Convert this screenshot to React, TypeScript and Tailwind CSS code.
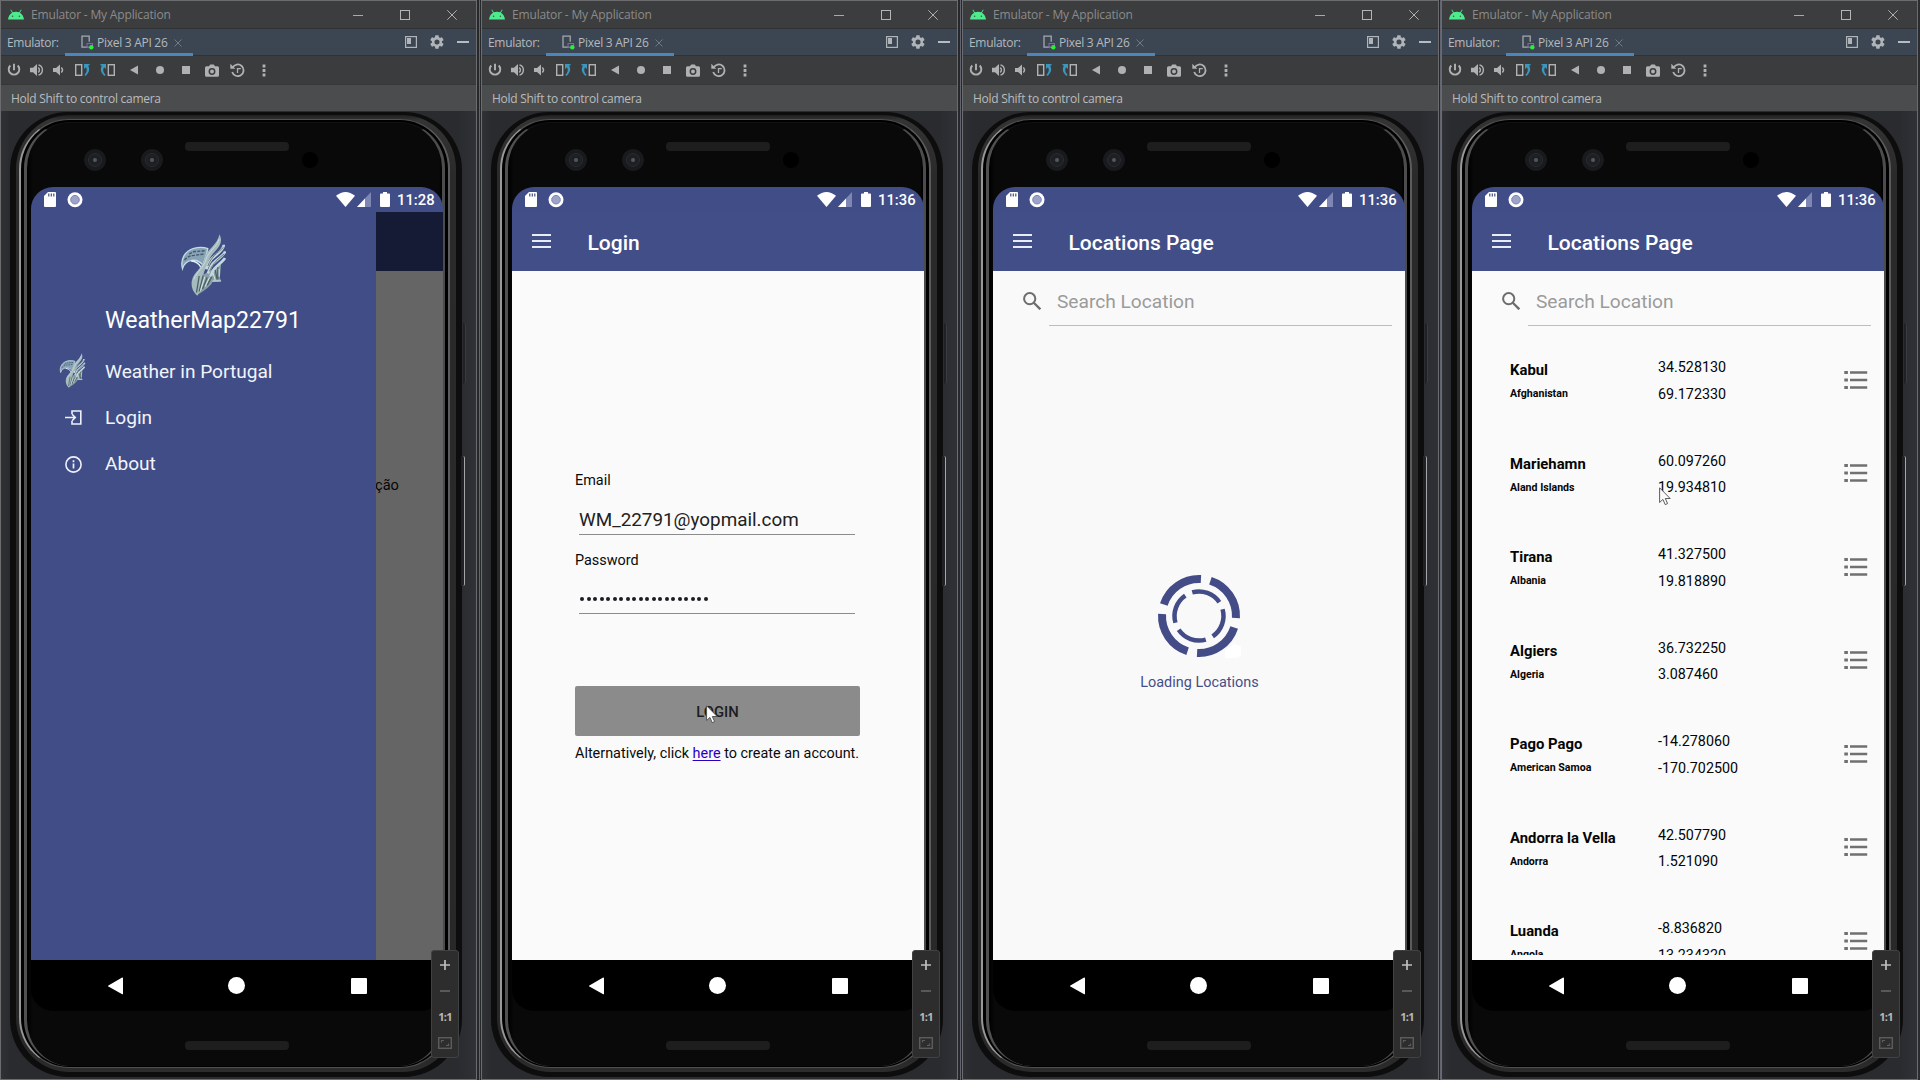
import type { ReactNode } from "react";

type IconProps = { className?: string; box: string; children: ReactNode };

function Icon({ className = "", box, children }: IconProps) {
  return (
    <svg viewBox={box} className={"block shrink-0 " + className} fill="none">
      {children}
    </svg>
  );
}

function AndroidHead() {
  return (
    <Icon box="0 0 16 11" className="h-[11px] w-4">
      <path d="M0 10.6C.3 7.6 1.8 5.1 4.1 3.7L2.4.9 3 .5l1.800 2.800C6.800 2.500 9.200 2.500 11.200 3.300L13 .5l.6.4-1.700 2.800C14.200 5.100 15.700 7.600 16 10.600Z" fill="#4deb8d" />
      <circle cx="4.600" cy="7.300" r=".8" fill="#2f6045" />
      <circle cx="11.400" cy="7.300" r=".8" fill="#2f6045" />
    </Icon>
  );
}

function TitleBar() {
  return (
    <div className="flex h-[28px] items-center border-b border-[#2f3133] bg-[#3b3d3f] pl-[7px] pr-[19px]">
      <AndroidHead />
      <span className="ml-[7px] whitespace-nowrap text-[12px] leading-[16px] tracking-[-0.17px] text-[#8b8b8b]">Emulator - My Application</span>
      <div className="ml-auto flex items-center gap-[37px]">
        <Icon box="0 0 10 10" className="size-[10px]"><path d="M0 5.500H10" stroke="#a9a9a9" /></Icon>
        <Icon box="0 0 10 10" className="size-[10px]"><rect x=".5" y=".5" width="9" height="9" stroke="#b5b5b5" /></Icon>
        <Icon box="0 0 10 10" className="size-[10px]"><path d="M.3.3 9.700 9.700M9.700.3.3 9.700" stroke="#b0b0b0" /></Icon>
      </div>
    </div>
  );
}

function TabBar() {
  return (
    <div className="flex h-[27px] border-b border-[#303336] bg-[#3c4652] pl-[6px] pr-[7px] text-[12px]">
      <span className="w-[58px] whitespace-nowrap pt-[6px] leading-[16px] tracking-[-0.3px] text-[#b4b9be]">Emulator:</span>
      <div className="flex h-[27px] w-[128px] border-b-[3px] border-[#4b86bd] pl-[16px]">
        <Icon box="0 0 13 15" className="mt-[6px] h-[15px] w-[13px]">
          <path d="M7.500 12.200H1V1.200h7.200v5.600" stroke="#a4a9ad" strokeWidth="1.300" />
          <rect x="6" y="8.500" width="5.500" height="4" stroke="#8067ab" />
          <circle cx="10.300" cy="12.300" r="2.200" fill="#2fee3a" />
        </Icon>
        <span className="ml-[3px] whitespace-nowrap pt-[6px] leading-[16px] tracking-[-0.28px] text-[#b4b9be]">Pixel 3 API 26</span>
        <Icon box="0 0 8 8" className="ml-auto mr-[11px] mt-[10px] size-2"><path d="M.5.5l7 7M7.500.5l-7 7" stroke="#707a84" /></Icon>
      </div>
      <div className="ml-auto flex items-center gap-[13px] pb-px">
        <Icon box="0 0 12 12" className="size-3"><rect x=".6" y=".6" width="10.800" height="10.800" stroke="#b0b4b8" strokeWidth="1.200" /><path d="M2 2h4v6H2z" fill="#b0b4b8" /></Icon>
        <Icon box="0 0 24 24" className="-mx-px size-4">
          <path fill="#b0b4b8" fillRule="evenodd" d="M19.400 13c.1-.6.1-1.400 0-2l2.200-1.700c.2-.2.3-.5.1-.7l-2-3.500c-.1-.2-.4-.3-.6-.2l-2.600 1c-.5-.4-1.100-.7-1.700-1L14.400 2.200c0-.2-.2-.4-.5-.4h-4c-.2 0-.4.200-.5.4L9 4.900c-.6.300-1.200.6-1.700 1l-2.600-1c-.2-.1-.5 0-.6.2l-2 3.500c-.1.200-.1.5.1.7L4.400 11c-.1.600-.1 1.400 0 2l-2.200 1.700c-.2.200-.2.500-.1.7l2 3.500c.1.200.4.300.6.2l2.600-1c.5.4 1.100.7 1.700 1l.4 2.700c.1.200.3.400.5.4h4c.3 0 .5-.2.500-.4l.4-2.700c.6-.3 1.200-.6 1.700-1l2.600 1c.2.100.5 0 .6-.2l2-3.500c.1-.2.100-.5-.1-.7ZM12 15.800a3.800 3.800 0 1 1 0-7.600 3.800 3.800 0 0 1 0 7.600Z" />
        </Icon>
        <Icon box="0 0 12 2" className="h-[2px] w-3"><path d="M0 1h12" stroke="#b8bcc0" strokeWidth="2" /></Icon>
      </div>
    </div>
  );
}

function Cell({ w, children }: { w: string; children: ReactNode }) {
  return <div className={"flex h-full items-center justify-center " + w}>{children}</div>;
}

function ToolBar() {
  const c = "#afb1b3";
  return (
    <div className="flex h-[29px] items-center border-b border-[#353739] bg-[#3b3c3e]">
      <Cell w="w-[26px]">
        <Icon box="0 0 14 14" className="size-[14px]"><path d="M3.300 2.500a5.300 5.300 0 1 0 7.400 0M7 .8v6.400" stroke={c} strokeWidth="1.900" /></Icon>
      </Cell>
      <Cell w="w-[19px]">
        <Icon box="0 0 14 14" className="size-[14px]"><path d="M0 4.700h3L7 1v12L3 9.300H0z" fill={c} /><path d="M8.200 4.600a3 3 0 0 1 0 4.800M8.500 1.900a5.300 5.300 0 0 1 0 10.200" stroke={c} strokeWidth="1.400" /></Icon>
      </Cell>
      <Cell w="w-[24px]">
        <Icon box="0 0 11 12" className="h-3 w-[11px]"><path d="M0 4h3l4-3.500v11L3 8H0z" fill={c} /><path d="M8.300 3.500q2.400 2.500 0 5" stroke={c} strokeWidth="1.500" /></Icon>
      </Cell>
      <Cell w="w-[25px]">
        <Icon box="0 0 15 14" className="mr-px h-[14px] w-[15px]"><rect x=".7" y="1.700" width="6" height="10.600" stroke={c} strokeWidth="1.400" /><path d="M9 1h5.500v1.500H13c2 3.200 1.600 7-2.600 10.500l-1-1.200c2.600-2.600 3-5 1.600-7.600L9 6z" fill="#3d96bd" /></Icon>
      </Cell>
      <Cell w="w-[26px]">
        <Icon box="0 0 15 14" className="mr-px h-[14px] w-[15px]"><rect x="8.300" y="1.700" width="6" height="10.600" stroke={c} strokeWidth="1.400" /><path d="M6 1H.5v1.500H2c-2 3.200-1.600 7 2.600 10.500l1-1.200C3 9.200 2.600 6.800 4 4.200L6 6z" fill="#3d96bd" /></Icon>
      </Cell>
      <Cell w="w-[26px]"><Icon box="0 0 8 10" className="h-[10px] w-2"><path d="M8 .5v9L0 5z" fill={c} /></Icon></Cell>
      <Cell w="w-[26px]"><div className="size-2 rounded-full bg-[#afb1b3]" /></Cell>
      <Cell w="w-[26px]"><div className="size-2 bg-[#afb1b3]" /></Cell>
      <Cell w="w-[26px]">
        <Icon box="0 0 14 13" className="h-[13px] w-[14px]"><path d="M1.500 2.300H4L5.200.6h3.600L10 2.300h2.500q1.500 0 1.500 1.500v7.400q0 1.500-1.500 1.500h-11Q0 12.700 0 11.200V3.800q0-1.500 1.500-1.500z" fill={c} /><circle cx="7" cy="7.500" r="2.700" stroke="#3b3c3e" strokeWidth="1.500" /></Icon>
      </Cell>
      <Cell w="w-[26px]">
        <Icon box="0 0 15 14" className="mr-px h-[14px] w-[15px]"><path d="M2.600 4.600a5.800 5.800 0 1 1-.4 4.400" stroke={c} strokeWidth="1.800" /><path d="M.3.800v5h5z" fill={c} /><path d="M7.500 10V5.700h3.300" stroke={c} strokeWidth="1.300" /></Icon>
      </Cell>
      <Cell w="w-[26px]"><Icon box="0 0 4 13" className="h-[13px] w-1"><path d="M.6.6h2.800v2.800H.6zM.6 5.100h2.800v2.800H.6zM.6 9.600h2.800v2.800H.6z" fill={c} /></Icon></Cell>
    </div>
  );
}

function Eagle({ className }: { className: string }) {
  return (
    <Icon box="18 18 134 186" className={className}>
      <path d="M22 122C14 94 30 68 56 61 70 57 88 58 98 62 94 82 88 96 84 112 74 100 62 96 50 97 36 99 26 108 22 122Z" fill="#86a2b4" stroke="#c4dde6" strokeWidth="4" />
      <path d="M28 96q12-14 30-14l28-4M42 78l14-7 34-3" stroke="#43566f" strokeWidth="4" strokeDasharray="9 4" />
      <path d="M48 99q20 1 30 20" stroke="#e2f4f5" strokeWidth="5" />
      <path d="M138 108 134 150 139 160 112 162C104 178 88 186 72 198L84 140Z" fill="#879fa6" />
      <path d="M133 19C142 36 138 52 120 70 100 90 98 106 91 122 80 142 86 162 77 190L66 203C46 186 44 158 59 138 74 120 84 110 88 90 94 66 126 52 133 19Z" fill="#a5bbbe" />
      <path d="M146 50C146 66 124 78 108 94 100 104 98 112 93 124M150 70C146 82 126 94 112 108 106 116 104 124 98 136M149 90C144 100 130 108 118 122 112 130 110 136 106 146" stroke="#c3d8dc" strokeWidth="8" />
      <path d="M145 58C126 76 108 86 98 114M147 78C130 92 114 104 103 130" stroke="#66796f" strokeWidth="3" />
      <path d="M128 118v36M120 126l6 28M110 146l-14 26M96 148 82 184M84 142 72 190M72 144l-8 50" stroke="#4f6264" strokeWidth="4" />
      <path d="M132 122v24M114 136l6 20M103 148l-13 28M89 146 76 188M112 159h25" stroke="#d6e9ea" strokeWidth="3" />
      <path d="M131 34C128 56 98 70 92 96 86 118 66 130 56 154" stroke="#c9dcdd" strokeWidth="3" />
    </Icon>
  );
}

function StatusBar({ time }: { time: string }) {
  return (
    <div className="flex h-[25px] shrink-0 items-start bg-[#414d87] pl-[13px] pr-[8px] pt-[5px]">
      <Icon box="0 0 12 15" className="h-[15px] w-3"><path d="M4 0h7q1 0 1 1v13q0 1-1 1H1q-1 0-1-1V4z" fill="#fff" /><path d="M4.800 1.500v3M7.300 1.500v3M9.800 1.500v3" stroke="#424c86" strokeWidth="1.200" /></Icon>
      <Icon box="0 0 16 16" className="ml-[11px] mr-px size-4"><circle cx="8" cy="7.700" r="7.500" fill="#fff" /><circle cx="8" cy="7.700" r="4.300" fill="#9da4c8" stroke="#7d86b3" /></Icon>
      <Icon box="0 0 19 15" className="ml-auto h-[15px] w-[19px]"><path d="M0 3.800Q9.500-3.800 19 3.800L9.500 15z" fill="#fff" /></Icon>
      <Icon box="0 0 14 15" className="ml-[2px] h-[15px] w-[14px]"><path d="M14 0v15H0z" fill="#7e86b4" /><path d="M8 6.400V15H0z" fill="#fff" /></Icon>
      <Icon box="0 0 10 15" className="ml-[9px] h-[15px] w-[10px]"><path d="M3 0h4v1.500h2q1 0 1 1V14q0 1-1 1H1q-1 0-1-1V2.500q0-1 1-1h2z" fill="#fff" /></Icon>
      <span className="ml-[7px] w-[38px] whitespace-nowrap font-['Roboto'] text-[14.800px] font-medium leading-[17px] text-white">{time}</span>
    </div>
  );
}

function AppBar({ title }: { title: string }) {
  return (
    <div className="flex h-[59px] shrink-0 items-start bg-[#424e88] pl-[20px] pt-[22px]">
      <Icon box="0 0 19 14" className="h-[14px] w-[19px]"><path d="M0 1h19M0 7h19M0 13h19" stroke="#e9ebf5" strokeWidth="2" /></Icon>
      <span className="ml-[36.500px] mt-[-3px] whitespace-nowrap font-['Roboto'] text-[21px] font-medium leading-[24px] text-white">{title}</span>
    </div>
  );
}

function NavBar() {
  return (
    <div className="flex h-[51px] shrink-0 items-center bg-black pl-[77px]">
      <Icon box="0 0 15 18" className="h-[18px] w-[15px]"><path d="M14.500.5q.5 0 .5.800v15.400q0 .8-.8.600L.4 9.600q-.6-.6 0-1.200L13.700.7z" fill="#fff" /></Icon>
      <div className="ml-[105px] size-[17px] rounded-full bg-white" />
      <div className="ml-[106px] size-4 rounded-[1px] bg-white" />
    </div>
  );
}

function Cursor({ className, fill }: { className: string; fill: string }) {
  return (
    <Icon box="0 0 13 19" className={"absolute h-[19px] w-[13px] " + className}>
      <path d="M.6.800v14.700l3.300-3.100 2.300 5.200 2.400-1-2.300-5.100h4.900z" fill={fill} stroke="#4b4b4b" strokeWidth=".9" />
    </Icon>
  );
}

function DrawerItem({ icon, label }: { icon: ReactNode; label: string }) {
  return (
    <div className="flex h-[46px] items-center">
      <div className="flex w-[74px] justify-center pl-[10px]">{icon}</div>
      <span className="whitespace-nowrap font-['Roboto'] text-[19.100px] leading-[24px] text-[#f2f4fa]">{label}</span>
    </div>
  );
}

function DrawerScreen() {
  return (
    <>
      <StatusBar time="11:28" />
      <div className="flex min-h-0 flex-1">
        <div className="w-[345px] bg-[#404d87] pt-[22px]">
          <Eagle className="ml-[150px] h-[62px] w-[45px]" />
          <div className="ml-[74px] mt-[11px] whitespace-nowrap font-['Roboto'] text-[23.100px] leading-[28px] text-white">WeatherMap22791</div>
          <div className="mt-[14px]">
            <DrawerItem icon={<Eagle className="mb-[4px] mr-[2px] h-[35px] w-[29px]" />} label="Weather in Portugal" />
            <DrawerItem
              icon={<Icon box="0 0 17 15" className="mb-px h-[15px] w-[17px]"><path d="M7 4V1h8.800v13H7v-3M0 7.500h10M7 4.200l3.300 3.300L7 10.800" stroke="#eef1fa" strokeWidth="1.600" /></Icon>}
              label="Login"
            />
            <DrawerItem
              icon={<Icon box="0 0 17 17" className="size-[17px]"><circle cx="8.500" cy="8.500" r="7.600" stroke="#eef1fa" strokeWidth="1.600" /><path d="M8.500 7.500v5M8.500 4.300v1.900" stroke="#eef1fa" strokeWidth="1.700" /></Icon>}
              label="About"
            />
          </div>
        </div>
        <div className="flex-1 overflow-hidden bg-[#656565]">
          <div className="h-[59px] bg-[#161b35]" />
          <div className="-ml-px mt-[205px] font-['Roboto'] text-[14.600px] leading-[18px] text-[#050505]">ção</div>
        </div>
      </div>
    </>
  );
}

function LoginScreen() {
  return (
    <>
      <StatusBar time="11:36" />
      <AppBar title="Login" />
      <div className="relative flex-1 bg-[#fafafa] pl-[63px] pt-[201px] font-['Roboto'] text-[14.420px] leading-[18px] text-[#0a0a0a]">
        <div>Email</div>
        <div className="ml-[4px] mt-[12px] h-[33px] w-[276px] whitespace-nowrap border-b border-[#8c8c8c] pt-[7px] text-[18.850px] leading-[22px] text-[#212121]">WM_22791@yopmail.com</div>
        <div className="mt-[17px]">Password</div>
        <div className="ml-[4px] mt-[11px] flex h-[33px] w-[276px] items-center gap-[2.500px] border-b border-[#8c8c8c] pl-px pt-[4px]">
          {Array.from({ length: 20 }, (_, i) => (
            <div key={i} className="size-[4px] rounded-full bg-[#1c1c24]" />
          ))}
        </div>
        <div className="mt-[72px] h-[50px] w-[285px] rounded-[2px] bg-[#8b8b8b] pt-[17px] text-center text-[14.800px] font-medium leading-[18px] text-[#1d1d1d]">LOGIN</div>
        <div className="mt-[9px] whitespace-nowrap">
          Alternatively, click <span className="text-[#2a00c8] underline underline-offset-2">here</span> to create an account.
        </div>
        <Cursor className="left-[194px] top-[434px]" fill="#ffffff" />
      </div>
    </>
  );
}

function SearchBar() {
  return (
    <div className="flex h-[55px] shrink-0 pl-[30px]">
      <Icon box="0 0 18 18" className="mt-[21px] size-[18px]"><circle cx="6.700" cy="6.700" r="5.600" stroke="#6d6d6d" strokeWidth="2" /><path d="m10.800 10.800 6.500 6.500" stroke="#6d6d6d" strokeWidth="2.300" /></Icon>
      <div className="ml-[8px] w-[343px] whitespace-nowrap border-b border-[#bdbdbd] pl-[8px] pt-[19px] font-['Roboto'] text-[19.150px] leading-[23px] text-[#9b9b9b]">Search Location</div>
    </div>
  );
}

// Point on a circle of radius r around (42, 42), clockwise degrees from twelve o'clock.
function arc(r: number, from: number, sweep: number) {
  const pt = (deg: number) => {
    const a = (deg * Math.PI) / 180;
    return `${42 + r * Math.sin(a)} ${42 - r * Math.cos(a)}`;
  };
  return `M${pt(from)}A${r} ${r} 0 0 1 ${pt(from + sweep)}`;
}

function LoadingScreen() {
  return (
    <>
      <StatusBar time="11:36" />
      <AppBar title="Locations Page" />
      <div className="flex flex-1 flex-col bg-[#f9f9fa]">
        <SearchBar />
        <div className="flex flex-col items-center pt-[248px]">
          <Icon box="0 0 84 84" className="size-[84px]">
            {[18, 108, 198, 288].map((a) => (
              <path key={a} d={arc(37, a, 75)} stroke="#434c87" strokeWidth="8" />
            ))}
            {[74, 164, 254, 344].map((a) => (
              <path key={a} d={arc(24.500, a, 72)} stroke="#434c87" strokeWidth="4.500" />
            ))}
            <path d="M68 77q6-5 9-7l10 3v8l-8 3H68z" fill="#fff" />
          </Icon>
          <div className="ml-px mt-[16px] whitespace-nowrap font-['Roboto'] text-[14.450px] leading-[18px] text-[#454e88]">Loading Locations</div>
        </div>
      </div>
    </>
  );
}

const places = [
  ["Kabul", "Afghanistan", "34.528130", "69.172330"],
  ["Mariehamn", "Aland Islands", "60.097260", "19.934810"],
  ["Tirana", "Albania", "41.327500", "19.818890"],
  ["Algiers", "Algeria", "36.732250", "3.087460"],
  ["Pago Pago", "American Samoa", "-14.278060", "-170.702500"],
  ["Andorra la Vella", "Andorra", "42.507790", "1.521090"],
  ["Luanda", "Angola", "-8.836820", "13.234320"],
];

function ListScreen() {
  return (
    <>
      <StatusBar time="11:36" />
      <AppBar title="Locations Page" />
      <div className="relative flex min-h-0 flex-1 flex-col bg-[#fafafa] pb-[5px]">
        <SearchBar />
        <div className="min-h-0 flex-1 overflow-hidden pt-[31px] font-['Roboto']">
          {places.map(([city, country, lat, lon]) => (
            <div key={city} className="flex h-[93.500px] pl-[38px] leading-[18px] text-[#050505]">
              <div className="w-[148px] whitespace-nowrap pt-[4px] text-[14.850px] font-bold">
                <div>{city}</div>
                <div className="mt-[8px] text-[10.600px] leading-[14px]">{country}</div>
              </div>
              <div className="w-[186px] whitespace-nowrap pt-px text-[14.300px]">
                <div>{lat}</div>
                <div className="mt-[8.500px]">{lon}</div>
              </div>
              <Icon box="0 0 24 20" className="mt-[12.500px] h-5 w-6">
                <path d="M6 2.500h17.200M6 10h17.200M6 17.500h17.200" stroke="#707070" strokeWidth="2.400" />
                <path d="M.3 2.500h3.600M.3 10h3.600M.3 17.500h3.600" stroke="#707070" strokeWidth="3.200" />
              </Icon>
            </div>
          ))}
        </div>
        <Cursor className="left-[187px] top-[216px]" fill="#fafafa" />
      </div>
    </>
  );
}

function Grille({ className }: { className: string }) {
  return (
    <div
      className={
        "h-[9px] w-[104px] rounded-[4px] bg-[#0f0f0f] bg-[radial-gradient(#2f2f2f_0.6px,transparent_0.8px)] bg-[length:2px_2px] " + className
      }
    />
  );
}

function Lens({ className }: { className: string }) {
  return (
    <div className={"flex size-[22px] items-center justify-center rounded-full bg-[#191a1d] " + className}>
      <div className="flex size-[14px] items-center justify-center rounded-full border border-[#2a2c30] bg-[#1d1f23]">
        <div className="size-[4px] rounded-full bg-[#54575b]" />
      </div>
    </div>
  );
}

function ZoomPanel() {
  return (
    <div className="absolute left-[430px] top-[839px] flex h-[108px] w-[28px] flex-col items-center rounded-[3px] border border-[#404142] bg-[#2d2d2e]">
      <Icon box="0 0 10 10" className="mt-[9px] size-[10px]"><path d="M0 5h10M5 0v10" stroke="#bfbfbf" strokeWidth="1.700" /></Icon>
      <div className="mt-[20px] h-[2px] w-[10px] bg-[#595959]" />
      <div className="mt-[17px] font-['Open_Sans'] text-[11px] font-bold leading-[16px] tracking-[-0.8px] text-[#b8b8b8]">1:1</div>
      <Icon box="0 0 14 12" className="mt-[12px] h-3 w-[14px]"><rect x=".7" y=".7" width="12.600" height="10.600" stroke="#5c5c5c" strokeWidth="1.400" /><path d="M3.500 5.500v-2h2.500M10.500 6.500v2H8" stroke="#5c5c5c" strokeWidth="1.200" /></Icon>
    </div>
  );
}

function Phone({ children }: { children: ReactNode }) {
  return (
    <div className="relative flex-1 bg-[linear-gradient(90deg,#303135,#2a2b2f_2%,#2a2b2f_96%,#303136)] pl-[9px] pt-px">
      <div className="h-[965px] w-[452px] rounded-[58px] bg-[#0d0d0d] px-[6px] pb-[5px] pt-[3px]">
        <div className="h-full rounded-[54px] bg-[linear-gradient(180deg,#1f1f1f,#343434_5px,#2a2a2a_60px,#282828_940px,#2c2c2c)] pb-[4px] pl-[3px] pr-[6px] pt-[4px]">
          <div className="h-full rounded-[50px] border-x-2 border-y border-b-[#505050] border-l-[#989898] border-r-[#5c5c5c] border-t-[#505050] bg-black px-[3px] pb-px pt-[2px]">
            <div className="flex h-full flex-col rounded-[46px] border-x-[3px] border-t border-l-[#505050] border-r-[#4c4c4c] border-t-[#111111] bg-[linear-gradient(90deg,#000,#090909_6px,#090909_412px,#000)] pl-[4px]">
              <div className="flex h-[64px] shrink-0 items-start">
                <Lens className="ml-[53px] mt-[26px]" />
                <Lens className="ml-[34.500px] mt-[26px]" />
                <Grille className="ml-[22.500px] mt-[19px]" />
                <div className="ml-[13px] mt-[29px] size-4 rounded-full bg-black" />
              </div>
              <div className="flex h-[824px] w-[412px] shrink-0 flex-col overflow-hidden rounded-[22px]">
                {children}
                <NavBar />
              </div>
              <Grille className="ml-[154px] mt-[30px]" />
            </div>
          </div>
        </div>
      </div>
      <div className="absolute left-[462px] top-[212px] h-[61px] w-[3px] rounded-r-sm border-r border-[#3a3b3e] bg-[#202124]" />
      <div className="absolute left-[460px] top-[345px] h-[130px] w-[4px] rounded-r-[2px] border-r border-[#a5a6a8] bg-[#202124]" />
      <ZoomPanel />
    </div>
  );
}

function EmulatorWindow({ children }: { children: ReactNode }) {
  return (
    <div className="flex h-[1080px] w-[477px] shrink-0 flex-col border border-[#6c6c6e]">
      <TitleBar />
      <TabBar />
      <ToolBar />
      <div className="h-[26px] whitespace-nowrap bg-[#4b4c4d] pl-[10px] pt-[5px] text-[12px] leading-[18px] tracking-[-0.27px] text-[#b9bcbf]">Hold Shift to control camera</div>
      <Phone>{children}</Phone>
    </div>
  );
}

function Gap({ w }: { w: string }) {
  return (
    <div className={"flex shrink-0 justify-center bg-[#27282b] " + w}>
      <div className="h-full w-px bg-[#62646f]" />
    </div>
  );
}

export default function App() {
  return (
    <div className="flex h-[1080px] w-[1920px] overflow-hidden bg-[#2b2c2f] font-['Open_Sans','Noto_Sans',sans-serif]">
      <EmulatorWindow><DrawerScreen /></EmulatorWindow>
      <Gap w="w-[4px]" />
      <EmulatorWindow><LoginScreen /></EmulatorWindow>
      <Gap w="w-[4px]" />
      <EmulatorWindow><LoadingScreen /></EmulatorWindow>
      <Gap w="w-[2px]" />
      <EmulatorWindow><ListScreen /></EmulatorWindow>
    </div>
  );
}
